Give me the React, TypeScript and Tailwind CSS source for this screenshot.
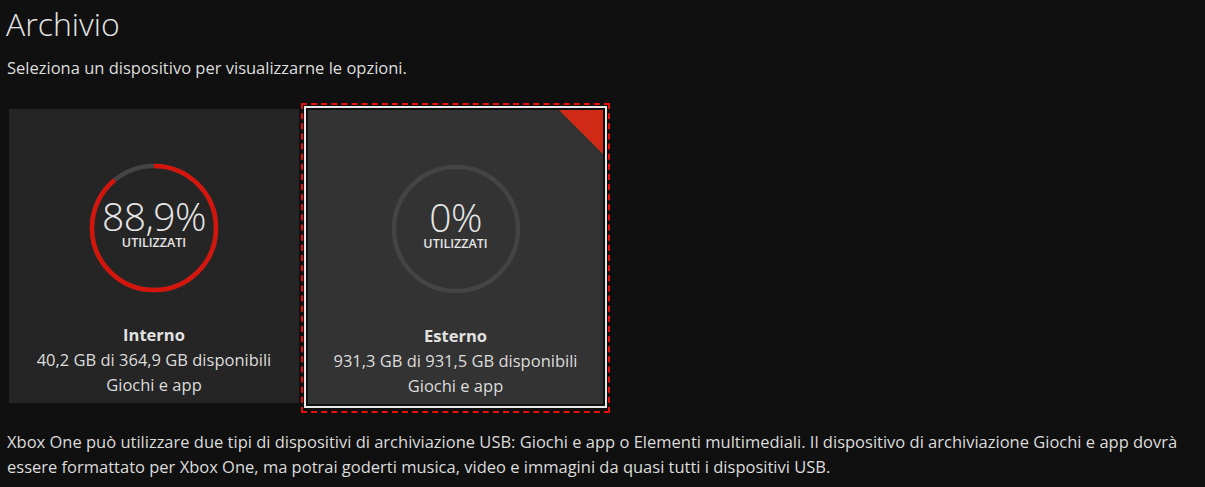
import React from "react";

const font = { fontFamily: '"Open Sans", "Noto Sans", sans-serif' };

function Ring({ pct }: { pct: number }) {
  const r = 62;
  const c = 2 * Math.PI * r;
  const used = (pct / 100) * c;
  return (
    <div className="grid w-[130px] h-[130px]">
      <svg width="130" height="130" viewBox="0 0 130 130" className="col-start-1 row-start-1">
        <circle cx="65" cy="65" r={r} fill="none" stroke="#444444" strokeWidth="4.5" />
        {pct > 0 && (
          <circle
            cx="65"
            cy="65"
            r={r}
            fill="none"
            stroke="#d4150b"
            strokeWidth="4.5"
            strokeDasharray={`${used} ${c}`}
            transform="rotate(-90 65 65)"
          />
        )}
      </svg>
      <div className="col-start-1 row-start-1 flex flex-col items-center justify-center">
        <div className="text-[39px] font-light leading-[36px] text-[#e6e6e6] mt-[-8px] tracking-[-0.5px]">{pct > 0 ? "88,9%" : "0%"}</div>
        <div className="text-[12.5px] font-semibold leading-none text-[#e6e6e6] mt-[3px]">UTILIZZATI</div>
      </div>
    </div>
  );
}

function Card({
  pct,
  name,
  info,
  bg,
  w,
  corner,
}: {
  pct: number;
  name: string;
  info: string;
  bg: string;
  w: string;
  corner?: boolean;
}) {
  return (
    <div className={`relative flex h-[294px] flex-col items-center ${bg} ${w} pt-[54px]`}>
      {corner && (
        <div className="absolute right-0 top-0 h-[44px] w-[44px] bg-[#d02a17] [clip-path:polygon(0_0,100%_0,100%_100%)]" />
      )}
      <Ring pct={pct} />
      <div className="mt-[29px] text-[16.5px] font-bold leading-[25px] text-[#e2e2e2]">{name}</div>
      <div className="text-[16.5px] leading-[25px] text-[#dcdcdc]">{info}</div>
      <div className="text-[16.5px] leading-[26px] text-[#dcdcdc]">Giochi e app</div>
    </div>
  );
}

export default function App() {
  return (
    <div style={font} className="h-[487px] w-[1205px] overflow-hidden bg-[#101010] text-[#e0e0e0]">
      <div className="pl-[6px] pt-[2px] text-[32px] font-light leading-[44px] text-[#e4e4e4]">Archivio</div>
      <div className="pl-[7px] pt-[10px] text-[16.5px] leading-[24px] text-[#dedede]">
        Seleziona un dispositivo per visualizzarne le opzioni.
      </div>
      <div className="mt-[23px] flex items-start pl-[9px]">
        <div className="mt-[6px]">
          <Card pct={88.9} name="Interno" info="40,2 GB di 364,9 GB disponibili" bg="bg-[#252525]" w="w-[290px]" />
        </div>
        <div className="ml-[2px] border-2 border-dashed border-[#e8100a] px-px pt-px pb-[3px]">
          <div className="border-2 border-[#e8e8e8] p-[2px]">
            <Card
              pct={0}
              name="Esterno"
              info="931,3 GB di 931,5 GB disponibili"
              bg="bg-[#333333]"
              w="w-[295px]"
              corner
            />
          </div>
        </div>
      </div>
      <div className="pl-[7px] pt-[16px] text-[16.5px] leading-[25px] text-[#dcdcdc]">
        Xbox One può utilizzare due tipi di dispositivi di archiviazione USB: Giochi e app o Elementi multimediali. Il dispositivo di archiviazione Giochi e app dovrà
        <br />
        essere formattato per Xbox One, ma potrai goderti musica, video e immagini da quasi tutti i dispositivi USB.
      </div>
    </div>
  );
}
